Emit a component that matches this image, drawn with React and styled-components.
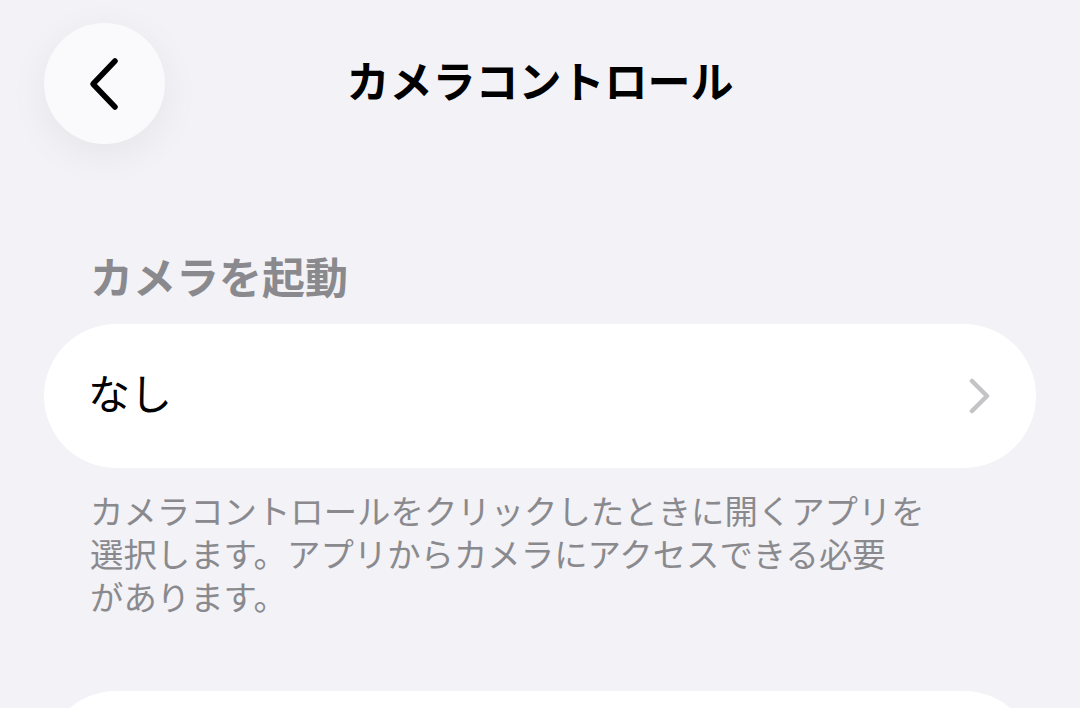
import React from 'react';
import styled, { createGlobalStyle } from 'styled-components';

const GlobalStyle = createGlobalStyle`
  html, body {
    margin: 0;
    padding: 0;
    background: #f2f2f7;
  }
  body {
    font-family: "Noto Sans CJK JP", "Noto Sans", sans-serif;
    -webkit-font-smoothing: antialiased;
  }
`

const Page = styled.div`
  width: 1080px;
  height: 708px;
  box-sizing: border-box;
  padding: 23px 44px 0;
  overflow: hidden;
  background: #f2f2f7;
`

const NavBar = styled.div`
  display: grid;
  grid-template-columns: 121px 1fr 121px;
  align-items: center;
  height: 121px;
`

const BackButton = styled.button`
  width: 121px;
  height: 121px;
  border-radius: 50%;
  border: none;
  padding: 0;
  background: #fafafc;
  box-shadow: 0 10px 40px rgba(0, 0, 0, 0.06);
  display: flex;
  align-items: center;
  justify-content: center;
`

const Title = styled.h1`
  margin: 0;
  padding-bottom: 8px;
  text-align: center;
  font-size: 43px;
  font-weight: 700;
  color: #000;
  line-height: 1;
`

const SectionHeader = styled.h2`
  margin: 105px 0 0;
  padding-left: 46px;
  font-size: 43px;
  line-height: 52px;
  font-weight: 700;
  color: #8a8a8e;
`

const Card = styled.div`
  margin-top: ${p => p.$top || 0}px;
  height: ${p => p.$height || 144}px;
  background: #fff;
  border-radius: 72px;
  display: flex;
  align-items: center;
  justify-content: space-between;
  padding: 0 44px 0 44px;
`

const RowLabel = styled.span`
  font-size: 42px;
  line-height: 1;
  padding-bottom: 8px;
  color: #000;
  font-weight: 400;
`

const Footer = styled.p`
  margin: 20px 0 0;
  padding-left: 46px;
  font-size: 33.4px;
  line-height: 43px;
  color: #8a8a8e;
  font-weight: 400;
`

const ChevronLeft = () => (
  <svg width="34" height="54" viewBox="0 0 34 54" fill="none">
    <path d="M27 4 L5 27 L27 50" stroke="#000" strokeWidth="5.5" strokeLinecap="round" strokeLinejoin="round" />
  </svg>
)

const ChevronRight = () => (
  <svg width="24" height="36" viewBox="0 0 24 36" fill="none">
    <path d="M4 3 L19 18 L4 33" stroke="#c4c4c7" strokeWidth="4.5" strokeLinecap="round" strokeLinejoin="round" />
  </svg>
)

export default function App() {
  return (
    <Page>
      <GlobalStyle />
      <NavBar>
        <BackButton aria-label="戻る"><ChevronLeft /></BackButton>
        <Title>カメラコントロール</Title>
        <div />
      </NavBar>
      <SectionHeader>カメラを起動</SectionHeader>
      <Card $top={23}>
        <RowLabel>なし</RowLabel>
        <ChevronRight />
      </Card>
      <Footer>
        カメラコントロールをクリックしたときに開くアプリを<br />
        選択します。アプリからカメラにアクセスできる必要<br />
        があります。
      </Footer>
      <Card $top={74} $height={144} />
    </Page>
  );
}
